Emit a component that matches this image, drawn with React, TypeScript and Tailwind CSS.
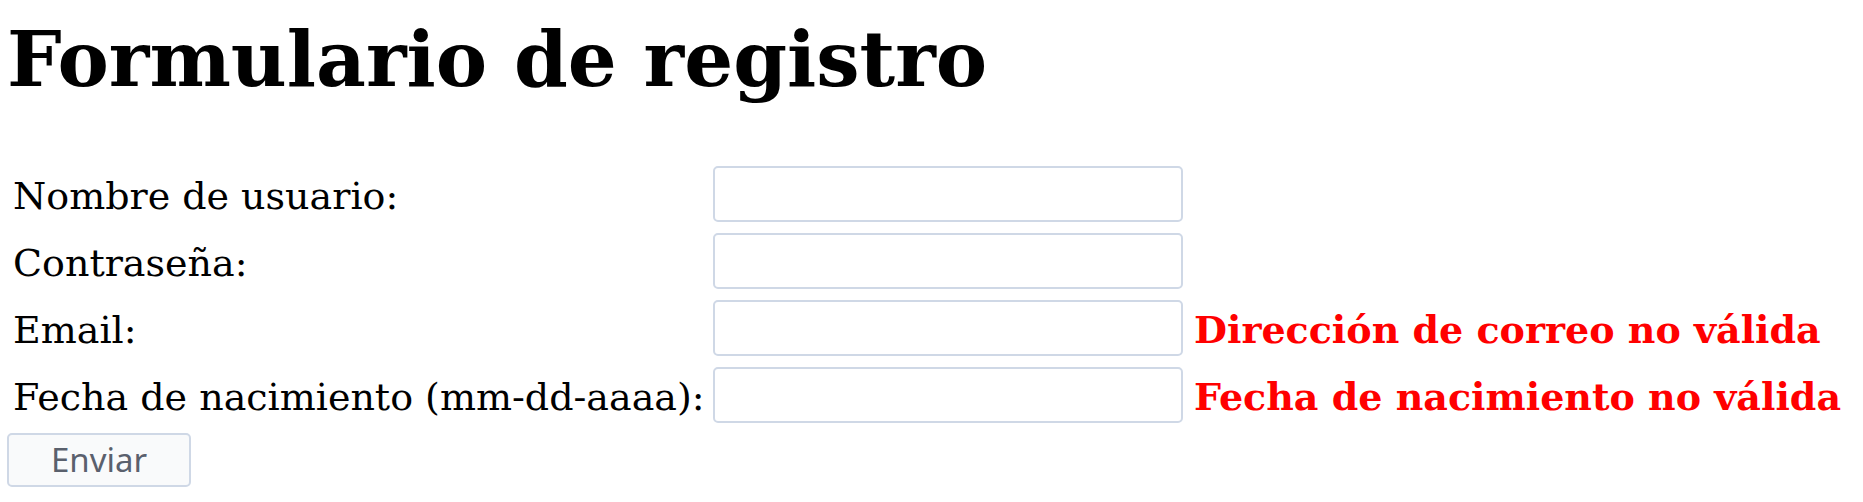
export default function App() {
  const rows = [
    { label: "Nombre de usuario:", type: "text", error: "" },
    { label: "Contraseña:", type: "password", error: "" },
    { label: "Email:", type: "text", error: "Dirección de correo no válida" },
    {
      label: "Fecha de nacimiento (mm-dd-aaaa):",
      type: "text",
      error: "Fecha de nacimiento no válida",
    },
  ];

  return (
    <div className="min-h-screen bg-white px-[7px] pt-[21px] font-['DejaVu_Serif',serif] text-black">
      <h1 className="text-[77px] font-bold leading-none">Formulario de registro</h1>

      <form className="mt-[68px]" onSubmit={(e) => e.preventDefault()}>
        <div className="grid grid-cols-[700px_470px_auto] auto-rows-[56px] items-center gap-x-[6px] gap-y-[11px]">
          {rows.map((row) => (
            <div key={row.label} className="contents">
              <label className="pl-[6px] pt-[4px] text-[38px] leading-[52px] whitespace-nowrap">
                {row.label}
              </label>
              <input
                type={row.type}
                className="h-[56px] w-[470px] rounded-[5px] border-2 border-[#cfd8e6] bg-white px-2 text-[32px] outline-none"
              />
              <span className="pl-[5px] pt-[4px] text-[38px] leading-[52px] font-bold whitespace-nowrap text-[#ff0000]">
                {row.error}
              </span>
            </div>
          ))}
        </div>

        <button
          type="submit"
          className="mt-[10px] h-[54px] w-[184px] rounded-[5px] border-2 border-[#cfd8e6] bg-[#f9fafb] font-['Noto_Sans',sans-serif] text-[33px] text-[#5a606d]"
        >
          Enviar
        </button>
      </form>
    </div>
  );
}
